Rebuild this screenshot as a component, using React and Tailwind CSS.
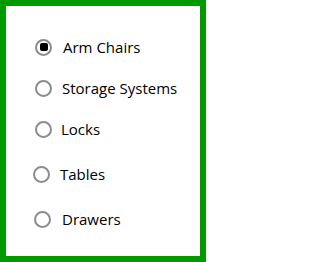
import React from "react";

function Radio({ checked }) {
  return (
    <span className="relative flex h-[17px] w-[17px] shrink-0 items-center justify-center rounded-full border-2 border-[#8c8c8c] bg-white">
      {checked && <span className="h-[8px] w-[8px] rounded-[2px] bg-black" />}
    </span>
  );
}

const items = [
  { label: "Arm Chairs", checked: true, cls: "mt-[31px] pl-[29px]", gap: "gap-[11px]" },
  { label: "Storage Systems", checked: false, cls: "mt-[21px] pl-[29px]", gap: "gap-[10px]" },
  { label: "Locks", checked: false, cls: "mt-[21px] pl-[29px]", gap: "gap-[9px]" },
  { label: "Tables", checked: false, cls: "mt-[25px] pl-[27px]", gap: "gap-[10px]" },
  { label: "Drawers", checked: false, cls: "mt-[25px] pl-[28px]", gap: "gap-[11px]" },
];

export default function App() {
  return (
    <div
      className="h-[262px] w-[206px] border-[6px] border-[#009900] bg-white text-[15px] text-black"
      style={{ fontFamily: '"Open Sans", "Noto Sans", sans-serif' }}
    >
      <div className="flex flex-col">
        {items.map((it) => (
          <div key={it.label} className={`flex h-[20px] items-center ${it.cls} ${it.gap}`}>
            <Radio checked={it.checked} />
            <span className="leading-none">{it.label}</span>
          </div>
        ))}
      </div>
    </div>
  );
}
